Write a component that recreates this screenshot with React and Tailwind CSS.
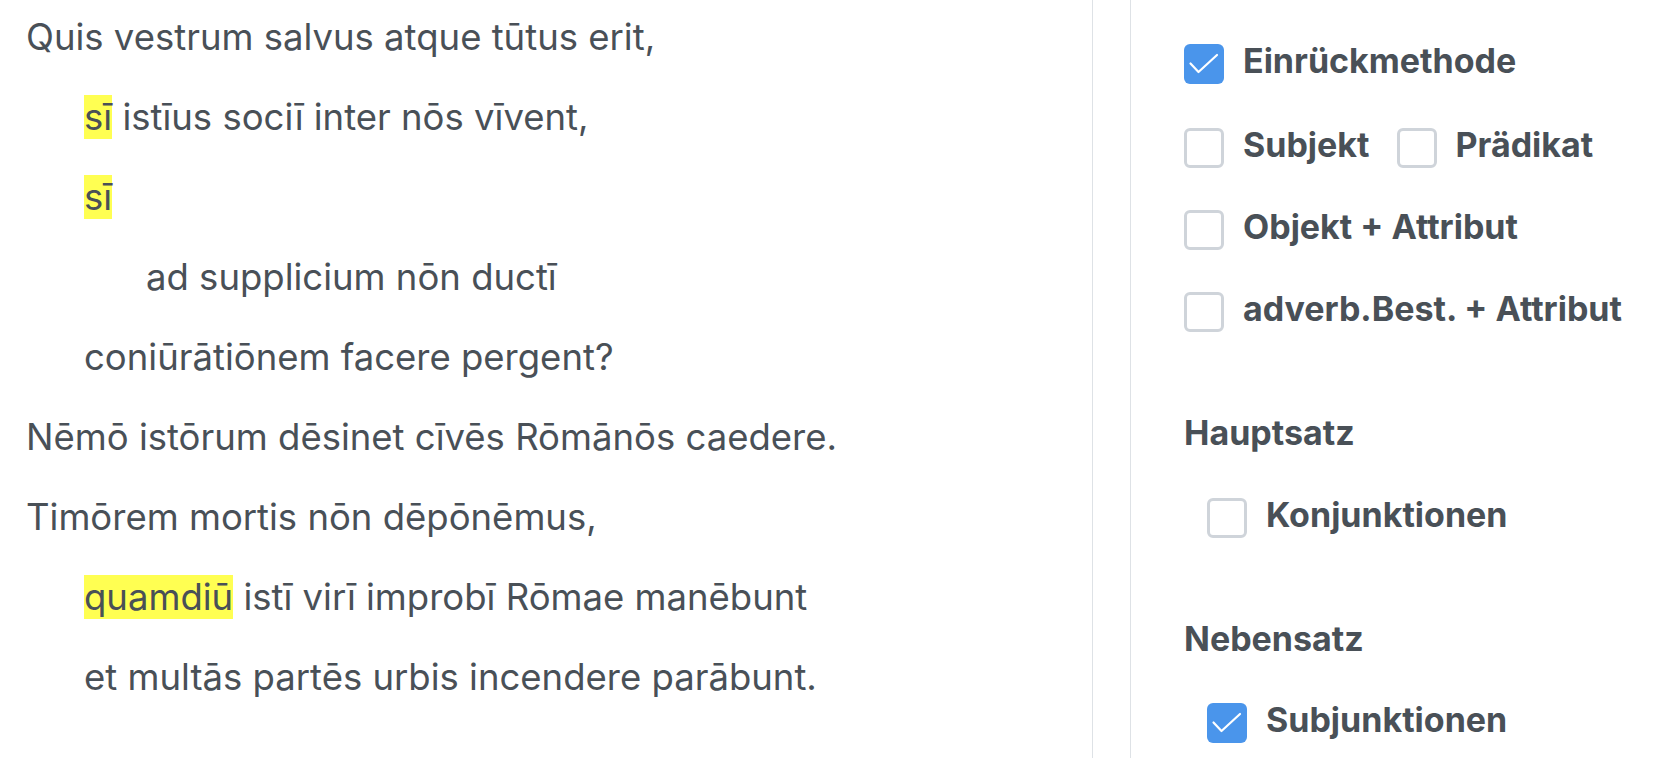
import React, { useState } from "react";

const lines = [
  { level: 0, parts: [{ t: "Quis vestrum salvus atque tūtus erit," }] },
  { level: 1, parts: [{ t: "sī", mark: true }, { t: " istīus sociī inter nōs vīvent," }] },
  { level: 1, parts: [{ t: "sī", mark: true }] },
  { level: 2, parts: [{ t: "ad supplicium nōn ductī" }] },
  { level: 1, parts: [{ t: "coniūrātiōnem facere pergent?" }] },
  { level: 0, parts: [{ t: "Nēmō istōrum dēsinet cīvēs Rōmānōs caedere." }] },
  { level: 0, parts: [{ t: "Timōrem mortis nōn dēpōnēmus," }] },
  { level: 1, parts: [{ t: "quamdiū", mark: true }, { t: " istī virī improbī Rōmae manēbunt" }] },
  { level: 1, parts: [{ t: "et multās partēs urbis incendere parābunt." }] },
];

function Check({ checked, onChange, label }) {
  return (
    <label className="flex items-center gap-[19px] cursor-pointer select-none">
      <span
        onClick={onChange}
        className={
          checked
            ? "flex items-center justify-center w-[40px] h-[40px] rounded-[6px] bg-[#4a95eb]"
            : "flex items-center justify-center w-[40px] h-[40px] rounded-[6px] border-[3px] border-[#cfd4da] bg-white"
        }
      >
        {checked && (
          <svg width="40" height="40" viewBox="0 0 40 40" fill="none">
            <polyline
              points="6.5,19.5 14.5,28 33,11"
              stroke="white"
              strokeWidth="2.2"
              strokeLinecap="round"
              strokeLinejoin="round"
            />
          </svg>
        )}
      </span>
      <span className="text-[34px] leading-[40px] font-bold -mt-[6px]">{label}</span>
    </label>
  );
}

export default function App() {
  const [opts, setOpts] = useState({
    einrueck: true,
    subjekt: false,
    praedikat: false,
    objekt: false,
    adverb: false,
    konj: false,
    subj: true,
  });
  const toggle = (k) => setOpts((o) => ({ ...o, [k]: !o[k] }));

  return (
    <div
      className="flex w-full h-[758px] bg-white text-[#495057] overflow-hidden"
      style={{ fontFamily: "Inter, 'Noto Sans', sans-serif" }}
    >
      {/* text */}
      <div className="w-[1093px] shrink-0 border-r border-[#dee2e6] pl-[26px] pt-[14px] flex flex-col gap-[34px]">
        {lines.map((line, i) => (
          <div
            key={i}
            className={
              "text-[36.5px] leading-[46px] whitespace-nowrap " +
              (line.level === 1 ? "ml-[58px]" : line.level === 2 ? "ml-[120px]" : "")
            }
          >
            {line.parts.map((p, j) =>
              p.mark ? (
                <mark key={j} className="bg-[#ffff52] text-[#495057]">
                  {p.t}
                </mark>
              ) : (
                <span key={j}>{p.t}</span>
              )
            )}
          </div>
        ))}
      </div>

      <div className="w-[37px] shrink-0" />

      {/* options */}
      <div className="flex-1 border-l border-[#dee2e6] pl-[53px] pt-[44px]">
        <Check checked={opts.einrueck} onChange={() => toggle("einrueck")} label="Einrückmethode" />
        <div className="flex items-center mt-[44px]">
          <Check checked={opts.subjekt} onChange={() => toggle("subjekt")} label="Subjekt" />
          <div className="ml-[27px]">
            <Check checked={opts.praedikat} onChange={() => toggle("praedikat")} label="Prädikat" />
          </div>
        </div>
        <div className="mt-[42px]">
          <Check checked={opts.objekt} onChange={() => toggle("objekt")} label="Objekt + Attribut" />
        </div>
        <div className="mt-[42px]">
          <Check checked={opts.adverb} onChange={() => toggle("adverb")} label="adverb.Best. + Attribut" />
        </div>

        <div className="mt-[81px] text-[34px] leading-[40px] font-bold">Hauptsatz</div>
        <div className="mt-[45px] ml-[23px]">
          <Check checked={opts.konj} onChange={() => toggle("konj")} label="Konjunktionen" />
        </div>

        <div className="mt-[81px] text-[34px] leading-[40px] font-bold">Nebensatz</div>
        <div className="mt-[44px] ml-[23px]">
          <Check checked={opts.subj} onChange={() => toggle("subj")} label="Subjunktionen" />
        </div>
      </div>
    </div>
  );
}
